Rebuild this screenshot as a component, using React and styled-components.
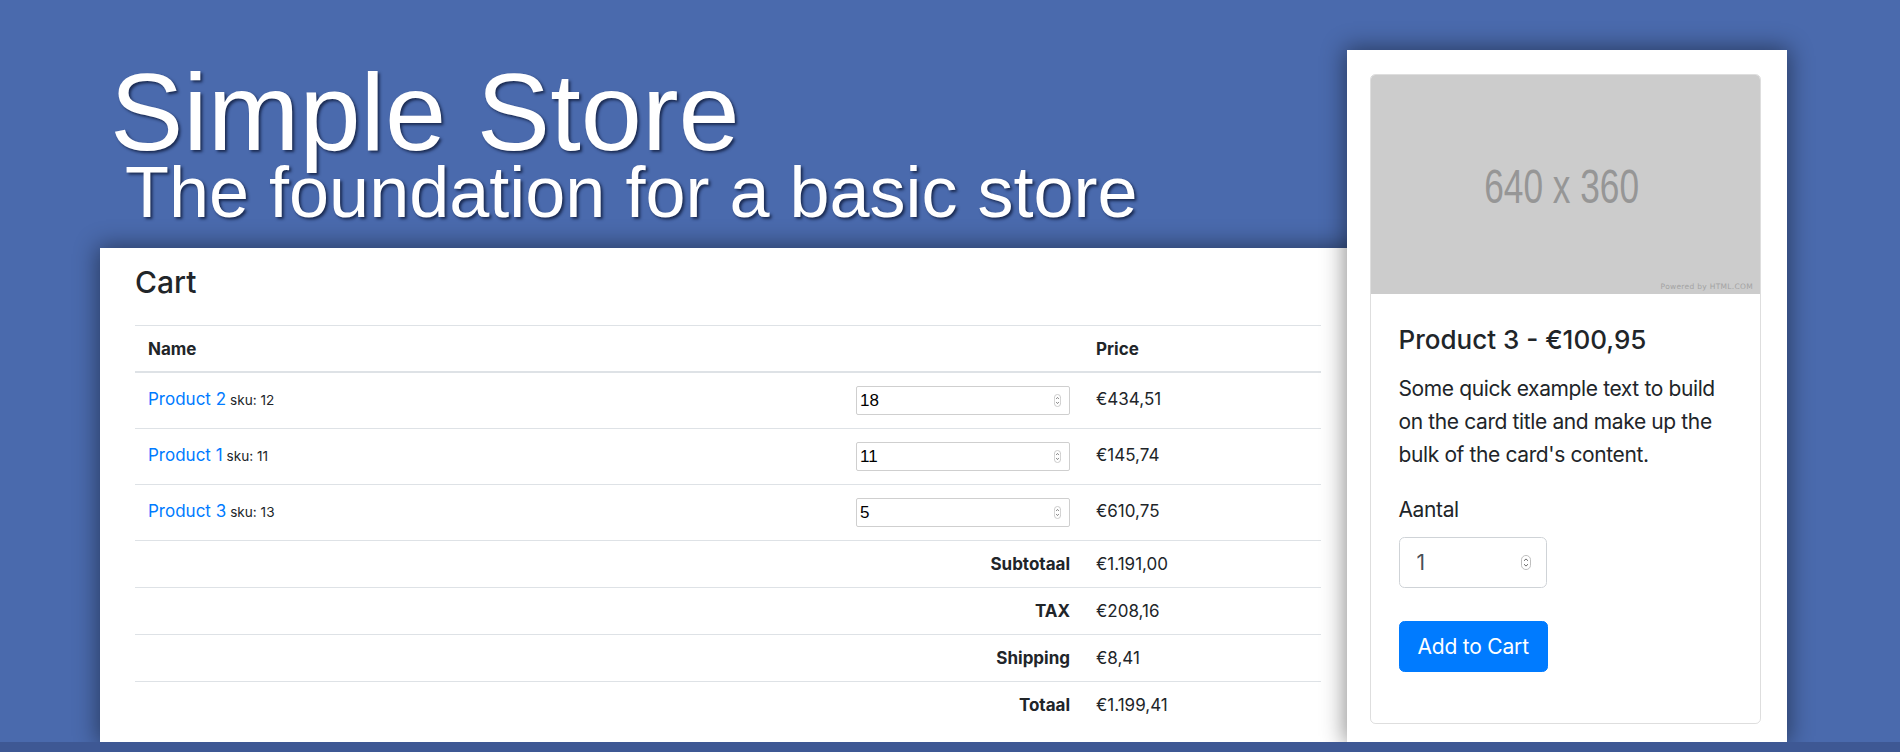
import React from "react";
import styled, { createGlobalStyle } from "styled-components";

const GlobalStyle = createGlobalStyle`
  body {
    margin: 0;
    background: #3e5894;
    font-family: Inter, "Noto Sans", sans-serif;
    color: #212529;
  }
`;

const Page = styled.div`
  display: flex;
  align-items: flex-start;
  height: 742px;
  padding-left: 100px;
  background: #4a6aad;
  overflow: hidden;
`;

const LeftColumn = styled.div`
  display: flex;
  flex-direction: column;
  width: 1256px;
  flex-shrink: 0;
  padding-top: 64px;
`;

const Hero = styled.div`
  padding-left: 10px;
  color: #fff;
  font-family: "Liberation Sans", Arial, sans-serif;
  text-shadow: 2px 2px 3px rgba(10, 20, 50, 0.75);
`;

const Title = styled.h1`
  margin: 0;
  font-size: 110px;
  font-weight: 400;
  line-height: 0.88;
`;

const Subtitle = styled.p`
  margin: 0 0 0 15px;
  font-size: 72px;
  line-height: 0.88;
`;

const CartPanel = styled.section`
  margin-top: 24px;
  padding: 16px 35px 14px;
  background: #fff;
  box-shadow: 0 0 22px 2px rgba(0, 0, 0, 0.45);
`;

const CartHeading = styled.h3`
  margin: 0 0 25px;
  font-size: 30px;
  font-weight: 500;
  line-height: 36px;
`;

const Table = styled.table`
  width: 100%;
  border-collapse: collapse;
  font-size: 17px;
  line-height: 26px;
`;

const Th = styled.th`
  text-align: left;
  font-weight: 700;
  padding: 10px 13px 9px;
  line-height: 26px;
  border-top: 1px solid #dee2e6;
  border-bottom: 2px solid #dee2e6;
`;

const Td = styled.td`
  padding: ${(p) => (p.$compact ? "10px 13px" : "13px")};
  vertical-align: ${(p) => (p.$compact ? "middle" : "top")};
  text-align: ${(p) => (p.$right ? "right" : "left")};
  font-weight: ${(p) => (p.$bold ? 700 : 400)};
  border-top: 1px solid #dee2e6;
  white-space: nowrap;
`;

const ProductLink = styled.a`
  color: #007bff;
  text-decoration: none;
`;

const Sku = styled.small`
  font-size: 13.6px;
  margin-left: 4px;
`;

const NumberBox = styled.label`
  display: flex;
  align-items: center;
  box-sizing: border-box;
  width: ${(p) => p.$width}px;
  height: ${(p) => p.$height}px;
  padding: ${(p) => p.$pad};
  background: #fff;
  border: 1px solid ${(p) => (p.$large ? "#cfd3d7" : "#cfcfcf")};
  border-radius: ${(p) => (p.$large ? "5.5px" : "2px")};
`;

const NumberInput = styled.input`
  flex: 1;
  min-width: 0;
  border: 0;
  outline: none;
  padding: 0;
  background: transparent;
  font-family: ${(p) => (p.$large ? 'Inter, "Noto Sans", sans-serif' : '"Liberation Sans", Arial, sans-serif')};
  font-size: ${(p) => (p.$large ? "21px" : "17px")};
  color: ${(p) => (p.$large ? "#495057" : "#000")};
  -moz-appearance: textfield;
  &::-webkit-inner-spin-button,
  &::-webkit-outer-spin-button {
    -webkit-appearance: none;
    margin: 0;
  }
`;

const ProductPanel = styled.aside`
  position: relative;
  z-index: 1;
  flex-shrink: 0;
  width: 440px;
  height: 692px;
  box-sizing: border-box;
  margin: 50px 0 0 -9px;
  padding: 24px 26px 21px 23px;
  background: #fff;
  box-shadow: 0 0 22px 2px rgba(0, 0, 0, 0.45);
`;

const Card = styled.div`
  display: flex;
  flex-direction: column;
  border: 1px solid rgba(0, 0, 0, 0.13);
  border-radius: 5.5px;
  overflow: hidden;
`;

const Placeholder = styled.div`
  height: 219px;
  background: #cccccc;
  display: flex;
  flex-direction: column;
  align-items: center;
  justify-content: center;
  position: relative;
`;

const PlaceholderSize = styled.span`
  display: inline-block;
  color: #969696;
  font-family: "Liberation Sans", Arial, sans-serif;
  font-size: 49px;
  transform: scaleX(0.72);
  margin: 3px 8px 0 0;
`;

const PoweredBy = styled.span`
  position: absolute;
  right: 7px;
  bottom: 3px;
  color: #a3a3a3;
  font-family: "DejaVu Sans", Verdana, sans-serif;
  font-size: 7.5px;
  letter-spacing: 0.3px;
`;

const CardBody = styled.div`
  padding: 29px 27.5px 51px;
  font-size: 21px;
  letter-spacing: -0.38px;
  line-height: 33px;
`;

const CardTitle = styled.h5`
  margin: 0 0 16px;
  font-size: 26px;
  font-weight: 500;
  letter-spacing: 0;
  line-height: 33px;
`;

const CardText = styled.p`
  margin: 0 0 22px;
`;

const FieldLabel = styled.div`
  margin-bottom: 11px;
`;

const AddButton = styled.button`
  margin-top: 33px;
  height: 51px;
  padding: 0 18px;
  border: 1px solid #007bff;
  border-radius: 5.5px;
  background: #007bff;
  color: #fff;
  font-family: Inter, "Noto Sans", sans-serif;
  font-size: 21px;
  letter-spacing: -0.2px;
  line-height: 33px;
`;

const Spinner = ({ w, h }) => (
  <svg width={w} height={h} viewBox="0 0 10 16" preserveAspectRatio="none">
    <rect x="0.5" y="0.5" width="9" height="15" rx="4.5" fill="#fff" stroke="#bdbdbd" />
    <path d="M3 6.2 L5 4.2 L7 6.2" fill="none" stroke="#666" strokeWidth="1" />
    <path d="M3 9.8 L5 11.8 L7 9.8" fill="none" stroke="#666" strokeWidth="1" />
  </svg>
);

const cartItems = [
  { name: "Product 2", sku: 12, qty: 18, price: "€434,51" },
  { name: "Product 1", sku: 11, qty: 11, price: "€145,74" },
  { name: "Product 3", sku: 13, qty: 5, price: "€610,75" },
];

const totals = [
  { label: "Subtotaal", value: "€1.191,00" },
  { label: "TAX", value: "€208,16" },
  { label: "Shipping", value: "€8,41" },
  { label: "Totaal", value: "€1.199,41" },
];

export default function App() {
  return (
    <>
      <GlobalStyle />
      <Page>
        <LeftColumn>
          <Hero>
            <Title>Simple Store</Title>
            <Subtitle>The foundation for a basic store</Subtitle>
          </Hero>
          <CartPanel>
            <CartHeading>Cart</CartHeading>
            <Table>
              <colgroup>
                <col style={{ width: 708 }} />
                <col style={{ width: 240 }} />
                <col />
              </colgroup>
              <thead>
                <tr>
                  <Th>Name</Th>
                  <Th />
                  <Th>Price</Th>
                </tr>
              </thead>
              <tbody>
                {cartItems.map((item) => (
                  <tr key={item.sku}>
                    <Td>
                      <ProductLink href="#">{item.name}</ProductLink>
                      <Sku>sku: {item.sku}</Sku>
                    </Td>
                    <Td>
                      <NumberBox $width={214} $height={29} $pad="0 8px 0 3px">
                        <NumberInput type="number" defaultValue={item.qty} />
                        <Spinner w={7} h={13} />
                      </NumberBox>
                    </Td>
                    <Td>{item.price}</Td>
                  </tr>
                ))}
                {totals.map((row) => (
                  <tr key={row.label}>
                    <Td $compact colSpan={2} $right $bold>
                      {row.label}
                    </Td>
                    <Td $compact>{row.value}</Td>
                  </tr>
                ))}
              </tbody>
            </Table>
          </CartPanel>
        </LeftColumn>

        <ProductPanel>
          <Card>
            <Placeholder>
              <PlaceholderSize>640 x 360</PlaceholderSize>
              <PoweredBy>Powered by HTML.COM</PoweredBy>
            </Placeholder>
            <CardBody>
              <CardTitle>Product 3 - €100,95</CardTitle>
              <CardText>
                Some quick example text to build on the card title and make up the bulk of the card's content.
              </CardText>
              <FieldLabel>Aantal</FieldLabel>
              <NumberBox $large $width={148} $height={51} $pad="0 15px 0 17px">
                <NumberInput $large type="number" defaultValue={1} />
                <Spinner w={10} h={15} />
              </NumberBox>
              <div>
                <AddButton>Add to Cart</AddButton>
              </div>
            </CardBody>
          </Card>
        </ProductPanel>
      </Page>
    </>
  );
}
